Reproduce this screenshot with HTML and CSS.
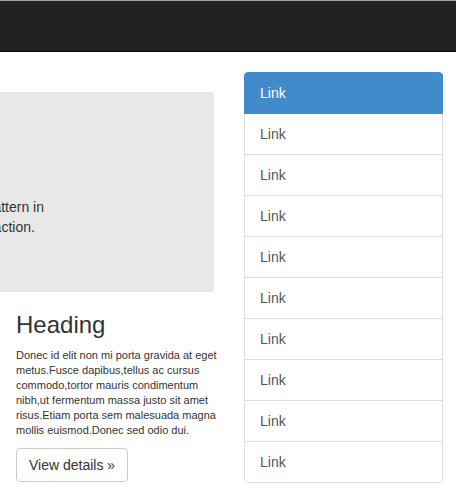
FILE: index.html
```html
<!DOCTYPE html>
<html lang="en">
<head>
<meta charset="utf-8">
<title>Off Canvas</title>
<link rel="stylesheet" href="styles.css">
</head>
<body>
<div class="navbar"></div>
<div class="page">
  <div class="main-col">
    <div class="jumbotron">
      <p class="lead">
        <span class="lead-box">
          <span class="line">This is an example to show the potential of an offcanvas layout pattern in</span>
          <span class="line">Bootstrap. Try some responsive-range viewport sizes to see it in action.</span>
        </span>
      </p>
    </div>
    <div class="card">
      <h2 class="card-title">Heading</h2>
      <p class="card-text">Donec id elit non mi porta gravida at eget metus.Fusce dapibus,tellus ac cursus commodo,tortor mauris condimentum nibh,ut fermentum massa justo sit amet risus.Etiam porta sem malesuada magna mollis euismod.Donec sed odio dui.</p>
      <a class="btn" href="#">View details »</a>
    </div>
  </div>
  <div class="side-col">
    <div class="list-group">
      <a class="list-item active" href="#">Link</a>
      <a class="list-item" href="#">Link</a>
      <a class="list-item" href="#">Link</a>
      <a class="list-item" href="#">Link</a>
      <a class="list-item" href="#">Link</a>
      <a class="list-item" href="#">Link</a>
      <a class="list-item" href="#">Link</a>
      <a class="list-item" href="#">Link</a>
      <a class="list-item" href="#">Link</a>
      <a class="list-item" href="#">Link</a>
    </div>
  </div>
</div>
</body>
</html>
```

FILE: styles.css
```css
html, body {
  margin: 0;
  padding: 0;
  background: #fff;
  overflow: hidden;
  font-family: "Liberation Sans", Arial, sans-serif;
  color: #333;
}
.navbar {
  height: 50px;
  background: #222;
  border-top: 1px solid #a3a3a3;
  border-bottom: 1px solid #080808;
}
.page {
  display: flex;
  align-items: flex-start;
}
.main-col {
  width: 198px;
  flex: none;
  margin-left: 1px;
  padding: 0 15px;
}
.jumbotron {
  margin-top: 40px;
  margin-left: -700px;
  height: 200px;
  background: #e8e8e8;
  box-sizing: border-box;
  padding-top: 105px;
}
.lead {
  margin: 0;
  margin-right: 170px;
  font-size: 14px;
  line-height: 20px;
  text-align: right;
}
.lead-box {
  display: inline-block;
  text-align: left;
}
.line {
  display: block;
  white-space: nowrap;
}
.card {
  margin-right: -8px;
}
.card-title {
  margin: 20px 0 0;
  font-size: 24px;
  line-height: 26px;
  font-weight: 500;
}
.card-text {
  margin: 10px 0 10px;
  font-size: 11px;
  line-height: 15px;
}
.btn {
  display: inline-block;
  padding: 6px 12px;
  border: 1px solid #ccc;
  border-radius: 4px;
  font-size: 14px;
  line-height: 20px;
  color: #333;
  text-decoration: none;
  background: #fff;
}
.side-col {
  flex: none;
  padding: 20px 15px 0;
}
.list-group {
  width: 199px;
  display: flex;
  flex-direction: column;
}
.list-item {
  display: block;
  padding: 10px 15px;
  border: 1px solid #ddd;
  margin-bottom: -1px;
  font-size: 14px;
  line-height: 20px;
  color: #555;
  text-decoration: none;
  background: #fff;
  position: relative;
}
.list-item:first-child {
  border-radius: 4px 4px 0 0;
}
.list-item:last-child {
  border-radius: 0 0 4px 4px;
  margin-bottom: 0;
}
.list-item.active {
  background: #428bca;
  border-color: #428bca;
  color: #fff;
  z-index: 2;
}
```
